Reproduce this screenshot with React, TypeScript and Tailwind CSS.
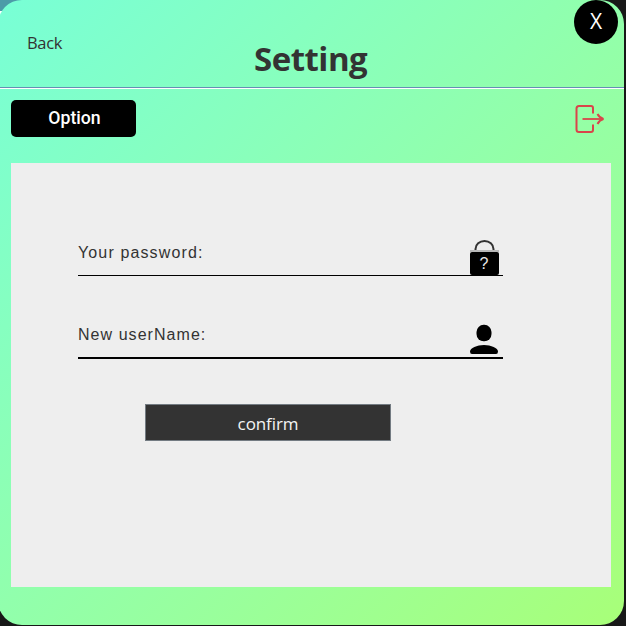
import React from "react";

function ExitIcon() {
  return (
    <svg className="block h-[30px] w-[31px]" viewBox="0 0 31 30" fill="none" stroke="#d9454a" strokeWidth="2">
      <path d="M19 9.500V4Q19 2 17 2H5Q2.500 2 2.500 4.500V25.500Q2.500 28 5 28H17Q19 28 19 26V20.500" />
      <path d="M8.500 15H28" strokeWidth="1.800" />
      <path d="M23.500 10Q25.500 14 29.500 15Q25.500 16 23.500 20" strokeWidth="2" />
    </svg>
  );
}

function LockIcon() {
  return (
    <div className="flex w-[30px] flex-col items-center">
      <svg className="block h-[12px] w-[29px]" viewBox="0 0 29 12" fill="none">
        <path d="M5.500 10.500V9A9 8 0 0 1 23.500 9V10.500" stroke="#333" strokeWidth="2" />
        <path d="M0 11H29" stroke="#b8b8b8" strokeWidth="2" />
      </svg>
      <div className="flex h-[23px] w-[29px] items-center justify-center rounded-[2px] bg-black font-['Liberation_Sans',sans-serif] text-[16px] leading-none text-[#e8e8e8]">
        ?
      </div>
    </div>
  );
}

function UserIcon() {
  return (
    <svg className="block h-[30px] w-[30px]" viewBox="0 0 30 30" fill="#000">
      <rect x="7.500" y="0.800" width="15" height="16.500" rx="7.200" />
      <path d="M1 27.500C1 24 8 21 15 21S29 24 29 27.500Q29 30 27 30H3Q1 30 1 27.500Z" />
    </svg>
  );
}

export default function App() {
  return (
    <div className="relative h-[626px] w-[626px] overflow-hidden bg-[#181818] font-['Open_Sans','Noto_Sans',sans-serif] text-[#333]">
      <div className="absolute left-0 top-0 h-[11px] w-[24px] bg-[#4c9ba8]" />
      <div className="absolute left-0 top-[11px] h-[6px] w-[10px] bg-white" />
      <div className="relative -ml-[2px] flex h-[625px] w-[626px] flex-col rounded-[24px] bg-linear-to-br from-[#78ffd6] to-[#a8ff78] pl-[2px]">
        <header className="flex h-[87px] shrink-0">
          <button className="ml-[27px] mt-[32px] h-[22px] w-[227px] text-left text-[16.500px] leading-[22px] tracking-[-0.300px]">
            Back
          </button>
          <h1 className="mt-[36px] h-[46px] whitespace-nowrap text-[33px] font-bold leading-[46px] tracking-[-0.500px]">
            Setting
          </h1>
          <button className="ml-auto mr-[6px] h-[44px] w-[44px] rounded-full bg-black text-center text-[21px] text-white">
            <span className="block h-[44px] leading-[42px]">X</span>
          </button>
        </header>
        <div className="h-[2px] shrink-0 border-t border-[#6490b4] bg-white" />
        <nav className="flex h-[74px] shrink-0 items-start justify-between pl-[11px] pr-[19px] pt-[11px]">
          <button className="h-[37px] w-[125px] rounded-[5px] bg-black pl-[2px] text-center font-['Roboto',sans-serif] text-[17.700px] font-medium text-white">
            <span className="block h-[37px] leading-[36px]">Option</span>
          </button>
          <div className="mt-[4px]">
            <ExitIcon />
          </div>
        </nav>
        <main className="ml-[11px] flex h-[424px] w-[600px] shrink-0 flex-col bg-[#eee] pl-[67px]">
          <div className="mt-[76px] flex h-[37px] w-[425px] items-end justify-between border-b border-black pr-[4px]">
            <label className="mb-[11px] font-['Liberation_Sans',sans-serif] text-[16px] leading-[22px] tracking-[1.130px]">
              Your password:
            </label>
            <LockIcon />
          </div>
          <div className="mt-[45px] flex h-[38px] w-[425px] items-end justify-between border-b-2 border-black pr-[4px]">
            <label className="mb-[11px] font-['Liberation_Sans',sans-serif] text-[16px] leading-[22px] tracking-[1.050px]">
              New userName:
            </label>
            <div className="mb-[3px]">
              <UserIcon />
            </div>
          </div>
          <button className="ml-[67px] mt-[45px] h-[37px] w-[246px] border border-[#737b82] bg-[#333] text-center text-[17px] leading-[37px] tracking-[-0.100px] text-[#f4f4f4]">
            confirm
          </button>
        </main>
      </div>
    </div>
  );
}
